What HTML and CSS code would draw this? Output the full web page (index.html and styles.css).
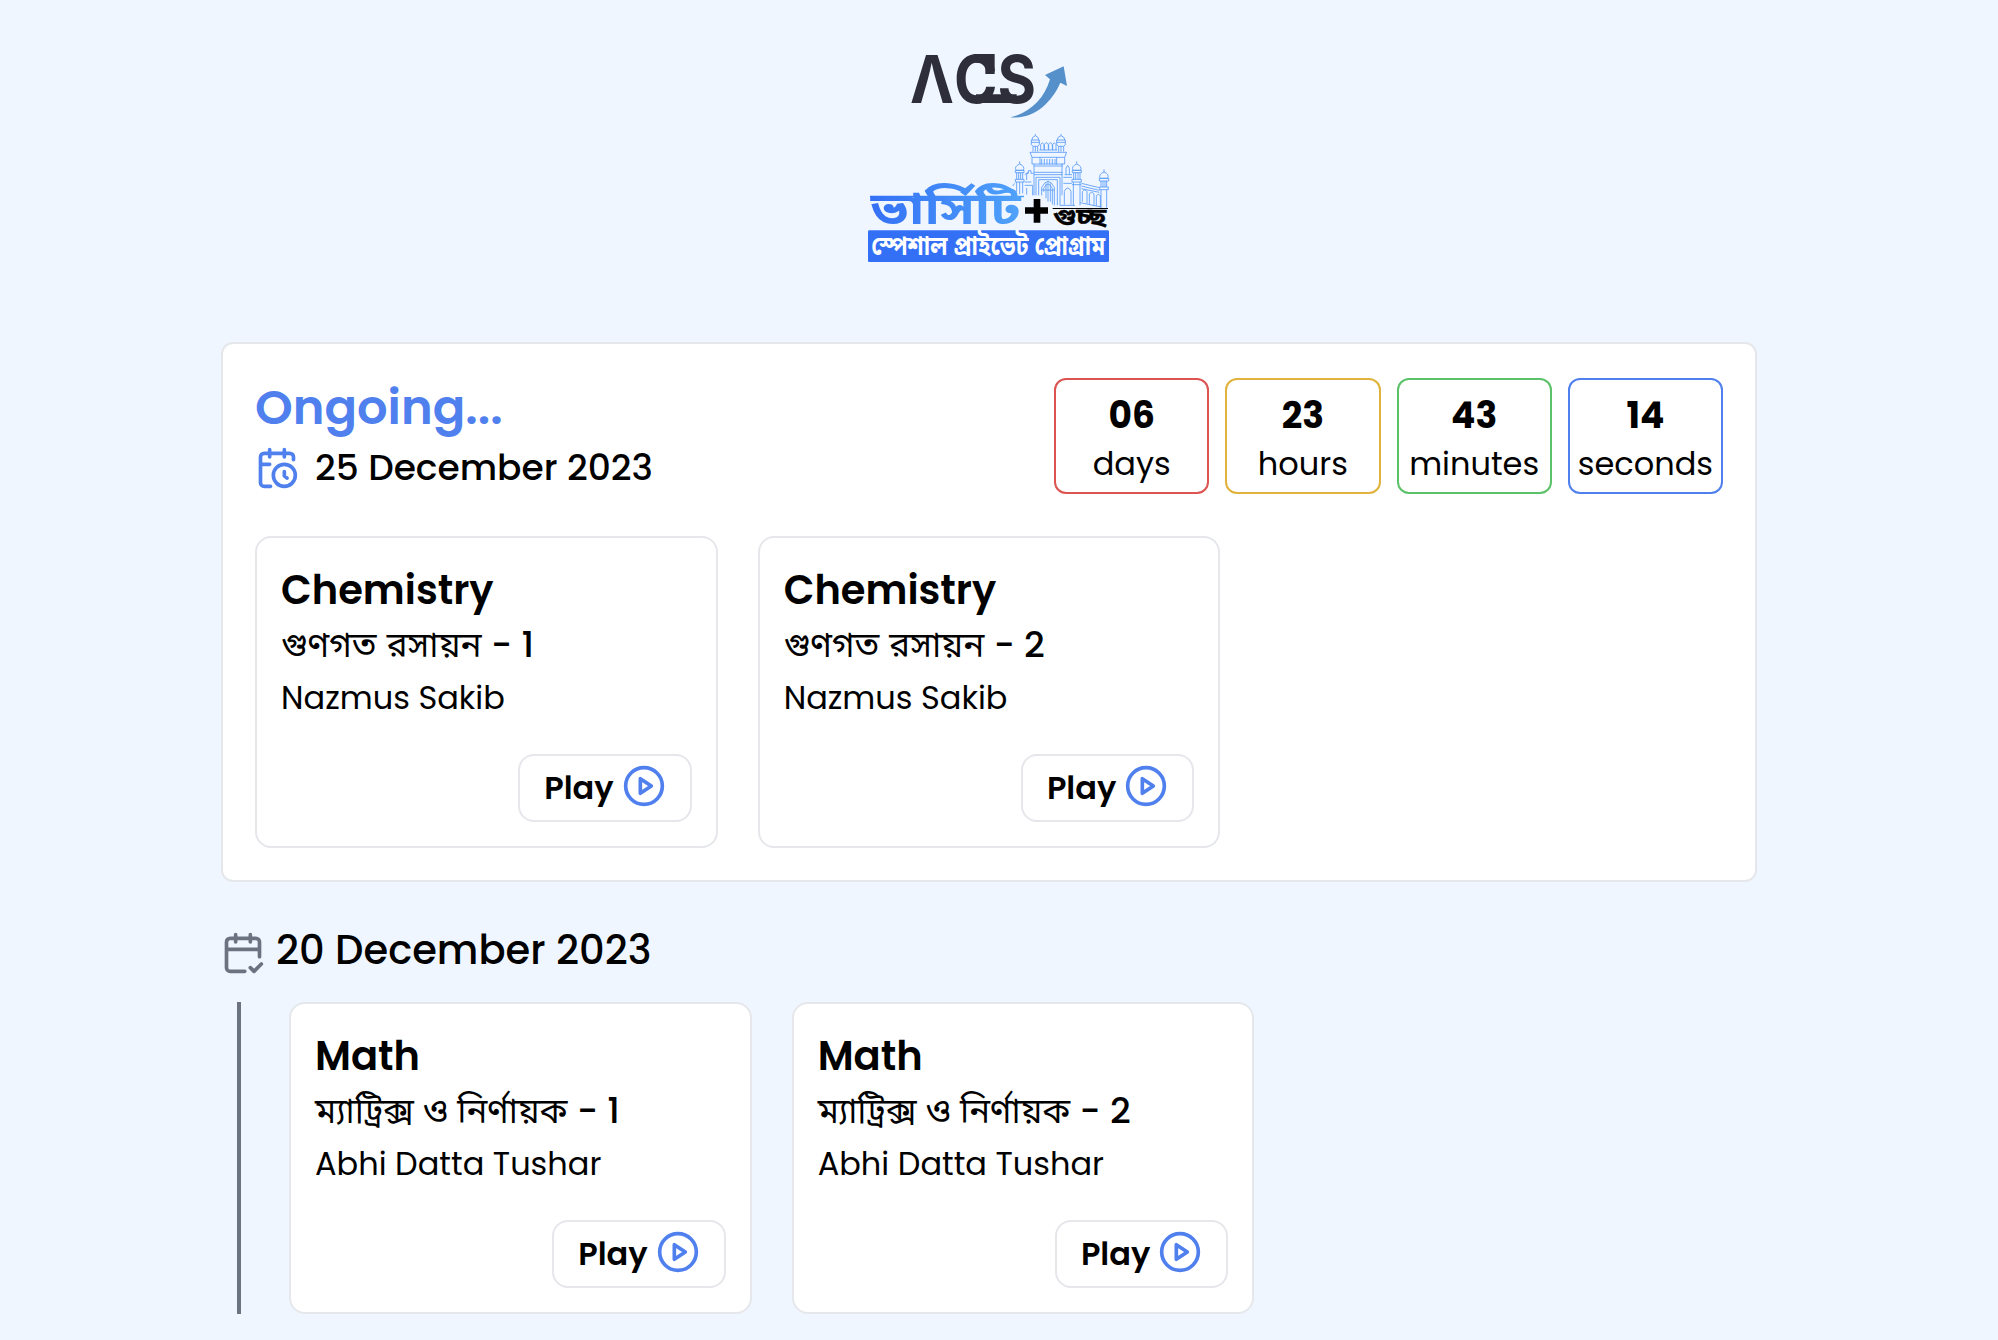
FILE: index.html
```html
<!DOCTYPE html>
<html lang="en">
<head>
<meta charset="utf-8">
<title>ACS Special Private Program</title>
<link rel="stylesheet" href="styles.css">
</head>
<body>
<svg class="sprite" aria-hidden="true">
  <symbol id="play" viewBox="0 0 24 24"><circle cx="12" cy="12" r="10"/><path d="M10 8l6 4-6 4z"/></symbol>
</svg>
<main class="page">
  <header class="brand">
    <svg class="brand-art" viewBox="0 0 834 690" role="img" aria-label="ACS">
      <defs>
        <linearGradient id="sky" gradientUnits="userSpaceOnUse" x1="60" y1="0" x2="520" y2="0"><stop offset="0" stop-color="#3470f5"/><stop offset="1" stop-color="#50a3fa"/></linearGradient>
      </defs>
      <text class="acs" x="180" y="188" textLength="378" lengthAdjust="spacingAndGlyphs">ΛCS</text>
      <path fill="#2e2e3a" d="M378 163h122v26H378zM378 42h56v60h-28V68h-28z"/>
      <path fill="#5590ca" d="M481 232C540 218 582 178 600 118L585 105L641 79L651 138L631 128C604 190 550 238 481 232Z"/>
      <g class="fort">
        <path d="M540 337h110l-6 15v20h-8v94M540 337l6 15v20h6v94M546 352h98M552 372h86M552 378h86M552 397h86M552 404h86M570 352v22M620 352v22M575 357v16M583 357v16M591 357v16M599 357v16M607 357v16M615 357v16"/>
        <path d="M544 300h24v14l-5 5v16M544 300v14l5 5v16M549 319h14M546 300q-2-8 10-13q12 5 10 13M556 287v-5M544 307h24M620 300h26v14l-5 5v16M620 300v14l6 5v16M626 319h15M622 300q-2-8 11-13q13 5 11 13M633 287v-5M620 307h26M556 319v16M633 319v16"/>
        <path d="M572 330v-16q5-10 10 0v16M583 330v-16q6-12 12 0v16M596 330v-16q5-12 11 0v16M608 330v-16q5-10 10 0v16M568 330h54"/>
        <path d="M558 466v-54h72v84M566 466v-47h56v77M575 466v-24q19-36 38 0v54M581 455v-10q13-26 26 0v48M594 425v60M575 450h38M588 430v45M601 430v55"/>
        <path d="M498 391q-6-12 11-19q17 7 11 19zM509 372v-8M496 391h26v7h-26zM500 398v20M518 398v20M506 398v20M512 398v20M496 418h26v8h-26zM500 426v30M518 426v34M494 430l-6 8M509 426v36M524 426h20M530 420v-20h5v-8h8v8h8M524 436h24v30M530 444v20M524 404l12-8"/>
        <path d="M669 391q-6-12 11-19q17 7 12 19zM680 372v-8M667 391h27v7h-27zM671 398v20M690 398v20M677 398v20M684 398v20M666 418h28v8h-28zM670 426v70M690 426v70M666 434h28M644 404h22M648 404v-20l5-8l5 8v20M640 412h26M640 430h26M643 494v-40q10-20 20 0v40"/>
        <path d="M750 415q-5-12 12-19q17 7 11 19zM762 396v-8M748 415h28v8h-28zM753 423v18M770 423v18M759 423v18M765 423v18M749 441h26v8h-26zM753 449v54M770 449v54M694 430l54 13M694 438l54 13M694 446l54 11M697 485v-30q7-10 14 0v36M718 492v-30q7-10 14 0v34M739 498v-30q6-10 12 0v34M690 488l64 13M630 496h45"/>
      </g>
      <text class="bn title" x="62" y="552" textLength="450" lengthAdjust="spacingAndGlyphs" fill="url(#sky)">ভার্সিটি</text>
      <path fill="url(#sky)" d="M60 467h462v5H60z"/>
      <path d="M551 477h20v25h23v19h-23v27h-20v-27h-26v-19h26z"/>
      <text class="bn minor" x="609" y="554" textLength="160" lengthAdjust="spacingAndGlyphs">গুচ্ছ</text>
      <path d="M608 504h166v3H608z"/>
      <rect x="54" y="571" width="723" height="95" rx="4" fill="#3470f5"/>
      <text class="bn strap" x="64" y="644" textLength="702" lengthAdjust="spacingAndGlyphs">স্পেশাল প্রাইভেট প্রোগ্রাম</text>
    </svg>
  </header>

  <section class="panel">
    <div class="panel-head">
      <div>
        <h1 class="status">Ongoing...</h1>
        <div class="date">
          <svg class="icon" viewBox="0 0 24 24"><path d="M21 7.5V6a2 2 0 0 0-2-2H5a2 2 0 0 0-2 2v14a2 2 0 0 0 2 2h3.5M16 2v4M8 2v4M3 10h5M17.5 17.5 16 16.3V14"/><circle cx="16" cy="16" r="6"/></svg>
          <span>25 December 2023</span>
        </div>
      </div>
      <div class="countdown">
        <div class="unit red"><b>06</b><span>days</span></div>
        <div class="unit amber"><b>23</b><span>hours</span></div>
        <div class="unit green"><b>43</b><span>minutes</span></div>
        <div class="unit blue"><b>14</b><span>seconds</span></div>
      </div>
    </div>
    <div class="cards">
      <article class="card">
        <h2>Chemistry</h2>
        <p class="topic loose"><span lang="bn">গুণগত রসায়ন</span> - 1</p>
        <p class="teacher">Nazmus Sakib</p>
        <button class="play">Play <svg class="icon"><use href="#play"/></svg></button>
      </article>
      <article class="card">
        <h2>Chemistry</h2>
        <p class="topic loose"><span lang="bn">গুণগত রসায়ন</span> - 2</p>
        <p class="teacher">Nazmus Sakib</p>
        <button class="play">Play <svg class="icon"><use href="#play"/></svg></button>
      </article>
    </div>
  </section>

  <section class="past">
    <div class="past-date">
      <svg class="icon" viewBox="0 0 24 24"><path d="M21 14V6a2 2 0 0 0-2-2H5a2 2 0 0 0-2 2v14a2 2 0 0 0 2 2h8M16 2v4M8 2v4M3 10h18M16 20l2 2 4-4"/></svg>
      <span>20 December 2023</span>
    </div>
    <div class="cards timeline">
      <article class="card">
        <h2>Math</h2>
        <p class="topic"><span lang="bn">ম্যাট্রিক্স ও নির্ণায়ক</span> - 1</p>
        <p class="teacher">Abhi Datta Tushar</p>
        <button class="play">Play <svg class="icon"><use href="#play"/></svg></button>
      </article>
      <article class="card">
        <h2>Math</h2>
        <p class="topic"><span lang="bn">ম্যাট্রিক্স ও নির্ণায়ক</span> - 2</p>
        <p class="teacher">Abhi Datta Tushar</p>
        <button class="play">Play <svg class="icon"><use href="#play"/></svg></button>
      </article>
    </div>
  </section>
</main>
</body>
</html>
```
FILE: styles.css
```css
* { box-sizing: border-box; margin: 0; padding: 0; }

body {
  background: #eff6ff;
  color: #000;
  font-family: Poppins, Inter, "Noto Sans", sans-serif;
  font-size: 32px;
  overflow: hidden;
}

.sprite { display: none; }

.page { width: 1536px; margin-left: 221px; padding-top: 40px; }

.brand { display: flex; justify-content: center; height: 302px; }
.brand-art { width: 278px; height: 230px; overflow: visible; }

.acs { fill: #2e2e3a; font: 700 198px Inter, sans-serif; }
.fort { fill: none; stroke: #5b9bf8; stroke-width: 2.6; }
.bn { font-family: "Noto Sans Bengali", "Noto Sans", sans-serif; font-weight: 700; }
.title { font-size: 132px; }
.minor { font-size: 70px; stroke: #000; stroke-width: 1; }
.strap { font-size: 80px; fill: #fff; }

.icon {
  width: 44px;
  height: 44px;
  flex: none;
  fill: none;
  stroke: #4f80ee;
  stroke-width: 2;
  stroke-linecap: round;
  stroke-linejoin: round;
}

.panel {
  height: 540px;
  padding: 32px;
  background: #fff;
  border: 2px solid #e5e7eb;
  border-radius: 12px;
}

.panel-head {
  display: flex;
  justify-content: space-between;
  align-items: center;
  height: 120px;
  padding-top: 2px;
}

.status { font-size: 48px; font-weight: 600; line-height: 62px; color: #4f80ee; }

.date {
  display: flex;
  align-items: center;
  gap: 16px;
  font-size: 36px;
  font-weight: 500;
  line-height: 58px;
}

.countdown { display: grid; grid-template-columns: repeat(4, 1fr); gap: 16px; width: 669px; margin-bottom: 2px; }

.unit {
  display: flex;
  flex-direction: column;
  align-items: center;
  height: 116px;
  padding: 8px 0;
  border: 2px solid;
  border-radius: 12px;
}
.unit b { font-size: 36px; font-weight: 700; line-height: 55px; }
.unit span { line-height: 41px; }
.unit b, .unit span { color: #000; }
.red { border-color: #dc5350; }
.amber { border-color: #e2b33c; }
.green { border-color: #5cc26a; }
.blue { border-color: #4f80ee; }

.cards { display: grid; grid-template-columns: repeat(3, 1fr); gap: 40px; margin-top: 40px; }

.card {
  display: flex;
  flex-direction: column;
  height: 312px;
  padding: 24px;
  background: #fff;
  border: 2px solid #e5e7eb;
  border-radius: 16px;
}
.card h2 { font-size: 40px; font-weight: 600; line-height: 56px; }

.topic { height: 55px; font-size: 36px; font-weight: 500; line-height: 54px; white-space: nowrap; }
.topic span {
  font-family: "Noto Sans Bengali", "Noto Sans", sans-serif;
  font-size: 34.6px;
  font-weight: 400;
  line-height: 1;
}
.topic.loose span { font-size: 35px; word-spacing: 1px; }

.teacher { line-height: 49px; }

.play {
  display: flex;
  align-items: center;
  align-self: flex-end;
  gap: 8px;
  height: 68px;
  margin-top: auto;
  padding: 0 24px;
  background: #fff;
  border: 2px solid #e5e7eb;
  border-radius: 16px;
  font: inherit;
  font-weight: 600;
}
.play .icon { margin-bottom: 4px; }

.past-date {
  display: flex;
  align-items: center;
  gap: 11px;
  margin-top: 38px;
  font-size: 40px;
  font-weight: 500;
  line-height: 60px;
}
.past-date .icon { margin-top: 6px; stroke: #6b7280; }

.timeline { width: 1520px; margin: 22px 0 0 16px; padding-left: 48px; border-left: 4px solid #6b7280; }
```
